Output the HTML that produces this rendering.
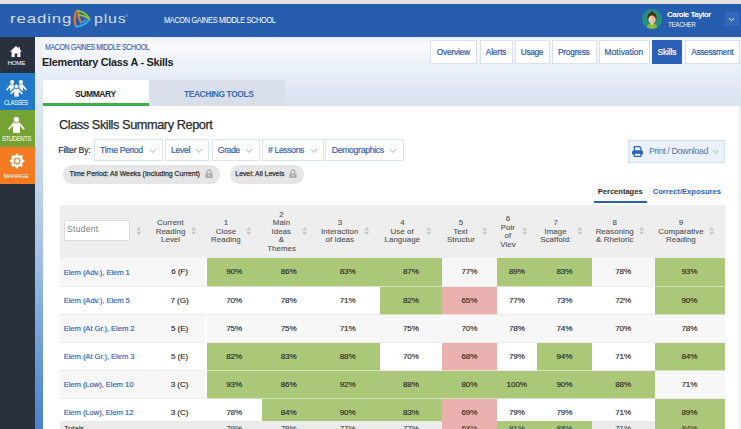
<!DOCTYPE html>
<html><head><meta charset="utf-8">
<style>
*{margin:0;padding:0;box-sizing:border-box}
html,body{width:741px;height:429px;overflow:hidden;background:#fff;font-family:"Liberation Sans",sans-serif}
.a{position:absolute}
.t{position:absolute;white-space:nowrap;line-height:1}
.g{background:#abc878}
.p{background:#e9b2af}
</style></head><body>
<div class="a" style="left:0;top:0;width:741px;height:3.5px;background:#e2e2e2"></div>
<div class="a" style="left:0;top:3.5px;width:741px;height:33.5px;background:#275dae"></div>
<div class="t" style="left:9.78px;top:12.19px;font-size:13.6px;color:#d3def3;letter-spacing:0.700px;transform-origin:0 0;transform:scaleX(1.2409)">reading</div>
<div class="t" style="left:93.87px;top:12.39px;font-size:13.6px;color:#d3def3;letter-spacing:0.700px;transform-origin:0 0;transform:scaleX(1.1721)">plus</div>
<svg class="a" style="left:124.5px;top:13.8px" width="3" height="3" viewBox="0 0 3 3"><circle cx="1.5" cy="1.5" r="1" fill="none" stroke="#9db5e0" stroke-width="0.5"/></svg>
<svg class="a" style="left:72px;top:9px" width="20" height="20" viewBox="0 0 20 20">
 <path d="M4.2 2.8 Q1.6 9 3.4 16" stroke="#ea7a1f" stroke-width="2.1" fill="none" stroke-linecap="round"/>
 <path d="M6.6 2.2 Q5.9 8.5 8.8 13.2" stroke="#ea7a1f" stroke-width="2.1" fill="none" stroke-linecap="round"/>
 <path d="M5.5 1.6 Q13 2.6 17.6 9.6" stroke="#8dc43e" stroke-width="1.7" fill="none" stroke-linecap="round"/>
 <path d="M6.8 6.2 Q12.5 6.2 17.2 10.2" stroke="#8dc43e" stroke-width="1.7" fill="none" stroke-linecap="round"/>
 <path d="M4 17.6 Q11 17.4 17.6 11" stroke="#3aa2e2" stroke-width="2.2" fill="none" stroke-linecap="round"/>
 <path d="M8.8 13.8 Q11.5 13 13.5 11" stroke="#3aa2e2" stroke-width="1.7" fill="none" stroke-linecap="round"/>
</svg>
<div class="t" style="left:163.59px;top:15.44px;font-size:9.4px;color:#ffffff;letter-spacing:-0.450px;transform-origin:0 0;transform:scaleX(0.7888)">MACON GAINES MIDDLE SCHOOL</div>
<svg class="a" style="left:642px;top:8.7px" width="20" height="20" viewBox="0 0 20 20">
 <circle cx="10" cy="10" r="10" fill="#26907f"/>
 <clipPath id="cc"><circle cx="10" cy="10" r="10"/></clipPath>
 <g clip-path="url(#cc)">
 <path d="M4.5 20 Q4.5 14.5 10 14.2 Q15.5 14.5 15.5 20Z" fill="#84b93e"/>
 <rect x="8.6" y="12" width="2.8" height="3" fill="#f2c6a0"/>
 <ellipse cx="10" cy="10" rx="3.5" ry="4.2" fill="#f5cba6"/>
 <path d="M10.2 6.5 Q13.5 7.5 13.5 10.5 Q13.3 13.5 10.2 14.2Z" fill="#e3b48e"/>
 <path d="M5.6 12.5 Q4.6 4.2 9 3.3 L10 1.2 L11 3.3 Q15.4 4.2 14.4 12.5 Q14 7 10 6.2 Q6 7 5.6 12.5Z" fill="#4b2b1d"/>
 <path d="M8.4 14.6 L10 17 L11.6 14.6Z" fill="#f2c6a0"/>
 </g>
</svg>
<div class="t" style="left:666.98px;top:10.54px;font-size:8.1px;color:#ffffff;letter-spacing:-0.450px;font-weight:bold;transform-origin:0 0;transform:scaleX(0.9692)">Carole Taylor</div>
<div class="t" style="left:667.56px;top:20.57px;font-size:7.0px;color:#eef3fb;letter-spacing:-0.450px;transform-origin:0 0;transform:scaleX(0.9086)">TEACHER</div>
<div class="a" style="left:724.5px;top:11.5px;width:14.5px;height:14.5px;background:#3169bf;border-radius:1.5px"></div>
<svg class="a" style="left:728.20px;top:16.60px" width="7.0" height="4.8" viewBox="0 0 7.0 4.8"><polyline points="1,1 3.50,3.80 6.00,1" fill="none" stroke="#e3ebf8" stroke-width="1"/></svg>
<div class="a" style="left:0;top:37px;width:34.5px;height:392px;background:#29313e"></div>
<div class="a" style="left:0;top:73px;width:34.5px;height:37px;background:#2279c9"></div>
<div class="a" style="left:0;top:110px;width:34.5px;height:37px;background:#74a334"></div>
<div class="a" style="left:0;top:147px;width:34.5px;height:37px;background:#f47b22"></div>
<svg class="a" style="left:10px;top:46px" width="12" height="11" viewBox="0 0 12 11">
 <path d="M6 0 L12 5.6 L10.4 5.6 L10.4 11 L7.3 11 L7.3 7.6 L4.7 7.6 L4.7 11 L1.6 11 L1.6 5.6 L0 5.6Z" fill="#fff"/>
 <rect x="8.4" y="1.2" width="1.5" height="2.5" fill="#fff"/>
</svg>
<div class="t" style="left:7.49px;top:60.35px;font-size:6.2px;color:#ffffff;letter-spacing:-0.208px">HOME</div>
<svg class="a" style="left:6px;top:80px" width="22" height="18" viewBox="0 0 22 18">
 <g fill="#fff" stroke="#fff" stroke-linecap="round">
  <circle cx="6.1" cy="2.1" r="2.1" stroke="none"/><circle cx="14.9" cy="2.1" r="2.1" stroke="none"/>
  <path d="M4 4.6 H8.4 V11.5 H4.2Z" stroke="none"/><path d="M12.6 4.6 H17 L16.8 11.5 H12.6Z" stroke="none"/>
  <path d="M4.6 5.2 L1.1 9.6 M16.4 5.2 L19.9 9.6" stroke-width="1.6" fill="none"/>
 </g>
 <g>
  <circle cx="10.5" cy="6.3" r="2.9" fill="#2279c9"/>
  <path d="M7 8.2 H14 L17.6 12.6 L13.8 17.5 H7.2 L3.4 12.6Z" fill="#2279c9"/>
  <circle cx="10.5" cy="6.3" r="1.9" fill="#fff"/>
  <path d="M8.3 8.9 H12.7 V16.6 H8.3Z" fill="#fff"/>
  <path d="M8.9 9.4 L5.2 13.4 M12.1 9.4 L15.8 13.4" stroke="#fff" stroke-width="1.6" stroke-linecap="round"/>
 </g>
</svg>
<div class="t" style="left:4.41px;top:99.58px;font-size:6.4px;color:#ffffff;letter-spacing:-0.450px;transform-origin:0 0;transform:scaleX(0.9044)">CLASSES</div>
<svg class="a" style="left:8px;top:115.5px" width="18" height="18" viewBox="0 0 18 18">
 <circle cx="8.3" cy="3.5" r="2.7" fill="#fff"/>
 <path d="M4.6 6.8 H12 L12 16.9 H5.2 Z" fill="#fff"/>
 <path d="M5.6 7.4 L1.1 12.8 M11.2 7.4 L15.7 12.8" stroke="#fff" stroke-width="1.7" stroke-linecap="round"/>
</svg>
<div class="t" style="left:1.73px;top:136.48px;font-size:6.4px;color:#ffffff;letter-spacing:-0.450px;transform-origin:0 0;transform:scaleX(0.9429)">STUDENTS</div>
<svg class="a" style="left:8.9px;top:153.3px" width="16" height="16" viewBox="0 0 16 16">
 <polygon points="8.00,0.40 10.03,3.10 13.37,2.63 12.90,5.97 15.60,8.00 12.90,10.03 13.37,13.37 10.03,12.90 8.00,15.60 5.97,12.90 2.63,13.37 3.10,10.03 0.40,8.00 3.10,5.97 2.63,2.63 5.97,3.10" fill="#fff" stroke="#fff" stroke-width="0.6" stroke-linejoin="round"/>
 <circle cx="8" cy="8" r="2.8" fill="none" stroke="#f47b22" stroke-width="1.15"/>
 
</svg>
<div class="t" style="left:3.79px;top:172.75px;font-size:6.2px;color:#ffffff;letter-spacing:-0.399px">MANAGE</div>
<div class="a" style="left:34.5px;top:37px;width:8.5px;height:392px;background:linear-gradient(#f1f4f9 0%,#e0e8f3 16%,#cbdaee 30%,#b9d0eb 42%,#a4c2e6 54%,#86b0dd 67%,#6296d4 85%,#4d80cc 100%)"></div>
<div class="a" style="left:43px;top:37px;width:698px;height:69px;background:linear-gradient(#e6e9ee 0px,#f3f5f8 3px,#f7f9fc 8px,#ebf1f9 30px,#dde6f2 58px,#d9e3f0 69px)"></div>
<div class="t" style="left:45.13px;top:43.37px;font-size:8.3px;color:#3d66b3;letter-spacing:-0.450px;transform-origin:0 0;transform:scaleX(0.8421);-webkit-text-stroke:0.15px #3d66b3">MACON GAINES MIDDLE SCHOOL</div>
<div class="t" style="left:42.07px;top:56.97px;font-size:10.9px;color:#222222;letter-spacing:-0.287px;font-weight:bold">Elementary Class A - Skills</div>
<div class="a" style="left:430px;top:39.5px;width:47px;height:24.5px;background:#ffffff;border:1px solid #d6e0ee"></div>
<div class="t" style="left:436.80px;top:47.69px;font-size:8.4px;color:#2c5aa8;letter-spacing:-0.247px;-webkit-text-stroke:0.2px #2c5aa8">Overview</div>
<div class="a" style="left:479.5px;top:39.5px;width:33.0px;height:24.5px;background:#ffffff;border:1px solid #d6e0ee"></div>
<div class="t" style="left:485.78px;top:47.69px;font-size:8.4px;color:#2c5aa8;letter-spacing:-0.190px;-webkit-text-stroke:0.2px #2c5aa8">Alerts</div>
<div class="a" style="left:514.5px;top:39.5px;width:35.5px;height:24.5px;background:#ffffff;border:1px solid #d6e0ee"></div>
<div class="t" style="left:520.85px;top:47.69px;font-size:8.4px;color:#2c5aa8;letter-spacing:-0.415px;-webkit-text-stroke:0.2px #2c5aa8">Usage</div>
<div class="a" style="left:552px;top:39.5px;width:44.5px;height:24.5px;background:#ffffff;border:1px solid #d6e0ee"></div>
<div class="t" style="left:557.91px;top:47.69px;font-size:8.4px;color:#2c5aa8;letter-spacing:-0.231px;-webkit-text-stroke:0.2px #2c5aa8">Progress</div>
<div class="a" style="left:598.5px;top:39.5px;width:51.5px;height:24.5px;background:#ffffff;border:1px solid #d6e0ee"></div>
<div class="t" style="left:604.61px;top:47.69px;font-size:8.4px;color:#2c5aa8;letter-spacing:0.050px;-webkit-text-stroke:0.2px #2c5aa8">Motivation</div>
<div class="a" style="left:652.2px;top:39.5px;width:30.0px;height:24.5px;background:#2a60b8;border:1px solid #2a60b8"></div>
<div class="t" style="left:657.62px;top:47.69px;font-size:8.4px;color:#ffffff;letter-spacing:-0.163px;-webkit-text-stroke:0.2px #ffffff">Skills</div>
<div class="a" style="left:685px;top:39.5px;width:55px;height:24.5px;background:#ffffff;border:1px solid #d6e0ee"></div>
<div class="t" style="left:691.28px;top:47.69px;font-size:8.4px;color:#2c5aa8;letter-spacing:-0.375px;-webkit-text-stroke:0.2px #2c5aa8">Assessment</div>
<div class="a" style="left:43px;top:80.3px;width:106px;height:25.7px;background:#fff"></div>
<div class="a" style="left:43px;top:103px;width:106px;height:3px;background:#3fae4a"></div>
<div class="t" style="left:75.35px;top:89.58px;font-size:9.0px;color:#222222;letter-spacing:-0.450px;font-weight:bold;transform-origin:0 0;transform:scaleX(0.9471)">SUMMARY</div>
<div class="a" style="left:149px;top:80.3px;width:136.4px;height:25.7px;background:#d8dfe8"></div>
<div class="t" style="left:183.71px;top:89.58px;font-size:9.0px;color:#3d6ab5;letter-spacing:-0.450px;font-weight:bold;transform-origin:0 0;transform:scaleX(0.9367)">TEACHING TOOLS</div>
<div class="a" style="left:43px;top:106px;width:696px;height:323px;background:#fff"></div>
<div class="a" style="left:739px;top:106px;width:2px;height:323px;background:#e9eef5"></div>
<div class="t" style="left:58.85px;top:119.38px;font-size:12.9px;color:#2a2a2a;letter-spacing:-0.450px;transform-origin:0 0;transform:scaleX(0.9911);-webkit-text-stroke:0.25px #2a2a2a">Class Skills Summary Report</div>
<div class="t" style="left:58.29px;top:145.94px;font-size:8.7px;color:#333333;letter-spacing:-0.201px;-webkit-text-stroke:0.2px #333">Filter By:</div>
<div class="a" style="left:93.8px;top:139.2px;width:68.8px;height:22.2px;background:#fff;border:1px solid #d9e4f3"></div>
<div class="t" style="left:100.10px;top:145.94px;font-size:8.7px;color:#2f62b3;letter-spacing:-0.344px;-webkit-text-stroke:0.18px #2f62b3">Time Period</div>
<svg class="a" style="left:148.70px;top:148.00px" width="7.8" height="5.5" viewBox="0 0 7.8 5.5"><polyline points="1,1 3.90,4.50 6.80,1" fill="none" stroke="#9bcf8a" stroke-width="1.0"/></svg>
<div class="a" style="left:164.9px;top:139.2px;width:44.5px;height:22.2px;background:#fff;border:1px solid #d9e4f3"></div>
<div class="t" style="left:170.99px;top:145.94px;font-size:8.7px;color:#2f62b3;letter-spacing:-0.301px;-webkit-text-stroke:0.18px #2f62b3">Level</div>
<svg class="a" style="left:195.00px;top:148.00px" width="7.8" height="5.5" viewBox="0 0 7.8 5.5"><polyline points="1,1 3.90,4.50 6.80,1" fill="none" stroke="#9bcf8a" stroke-width="1.0"/></svg>
<div class="a" style="left:211.8px;top:139.2px;width:47.8px;height:22.2px;background:#fff;border:1px solid #d9e4f3"></div>
<div class="t" style="left:217.86px;top:145.94px;font-size:8.7px;color:#2f62b3;letter-spacing:-0.450px;-webkit-text-stroke:0.18px #2f62b3">Grade</div>
<svg class="a" style="left:245.20px;top:148.00px" width="7.8" height="5.5" viewBox="0 0 7.8 5.5"><polyline points="1,1 3.90,4.50 6.80,1" fill="none" stroke="#9bcf8a" stroke-width="1.0"/></svg>
<div class="a" style="left:262px;top:139.2px;width:61.8px;height:22.2px;background:#fff;border:1px solid #d9e4f3"></div>
<div class="t" style="left:268.06px;top:145.94px;font-size:8.7px;color:#2f62b3;letter-spacing:-0.401px;-webkit-text-stroke:0.18px #2f62b3"># Lessons</div>
<svg class="a" style="left:309.60px;top:148.00px" width="7.8" height="5.5" viewBox="0 0 7.8 5.5"><polyline points="1,1 3.90,4.50 6.80,1" fill="none" stroke="#9bcf8a" stroke-width="1.0"/></svg>
<div class="a" style="left:325.4px;top:139.2px;width:78.3px;height:22.2px;background:#fff;border:1px solid #d9e4f3"></div>
<div class="t" style="left:331.79px;top:145.94px;font-size:8.7px;color:#2f62b3;letter-spacing:-0.333px;-webkit-text-stroke:0.18px #2f62b3">Demographics</div>
<svg class="a" style="left:389.00px;top:148.00px" width="7.8" height="5.5" viewBox="0 0 7.8 5.5"><polyline points="1,1 3.90,4.50 6.80,1" fill="none" stroke="#9bcf8a" stroke-width="1.0"/></svg>
<div class="a" style="left:62.6px;top:165.2px;width:157.2px;height:18.4px;background:#e6e6e6;border-radius:9.2px"></div>
<div class="t" style="left:69.55px;top:171.46px;font-size:6.9px;color:#333333;letter-spacing:0.013px;-webkit-text-stroke:0.25px #333">Time Period: All Weeks (Including Current)</div>
<svg class="a" style="left:205.1px;top:168.9px" width="8" height="9.5" viewBox="0 0 8 9.5"><path d="M2 4.2 V3 A2 2 0 0 1 6 3 V4.2" stroke="#b0b0b0" stroke-width="1.3" fill="none"/><rect x="0.3" y="4.2" width="7.4" height="5.3" rx="0.6" fill="#b0b0b0"/><circle cx="4" cy="6.6" r="0.9" fill="#d6d6d6"/></svg>
<div class="a" style="left:229.6px;top:165px;width:74.5px;height:18.6px;background:#e6e6e6;border-radius:9.3px"></div>
<div class="t" style="left:235.33px;top:171.26px;font-size:6.9px;color:#333333;letter-spacing:-0.022px;-webkit-text-stroke:0.25px #333">Level: All Levels</div>
<svg class="a" style="left:288.9px;top:168.8px" width="8" height="9.5" viewBox="0 0 8 9.5"><path d="M2 4.2 V3 A2 2 0 0 1 6 3 V4.2" stroke="#b0b0b0" stroke-width="1.3" fill="none"/><rect x="0.3" y="4.2" width="7.4" height="5.3" rx="0.6" fill="#b0b0b0"/><circle cx="4" cy="6.6" r="0.9" fill="#d6d6d6"/></svg>
<div class="a" style="left:628px;top:139.6px;width:97.3px;height:23.3px;background:#eaf1fa;border:1px solid #d3e0f1"></div>
<svg class="a" style="left:632px;top:146px" width="11.2" height="11" viewBox="0 0 11.2 11">
 <path d="M2.3 0.6 H7.6 L9 2 V5 H2.3Z" fill="none" stroke="#2d62b5" stroke-width="1.2"/>
 <rect x="0" y="4.6" width="11.2" height="4.2" rx="1.6" fill="#2d62b5"/>
 <rect x="2.3" y="7.2" width="6.6" height="3.2" fill="#eaf1fa" stroke="#2d62b5" stroke-width="1.2"/>
</svg>
<div class="t" style="left:648.76px;top:147.11px;font-size:9.2px;color:#5875a8;letter-spacing:-0.450px;transform-origin:0 0;transform:scaleX(0.9798)">Print / Download</div>
<svg class="a" style="left:712.00px;top:148.90px" width="7.1" height="5.3" viewBox="0 0 7.1 5.3"><polyline points="1,1 3.55,4.30 6.10,1" fill="none" stroke="#9bcf8a" stroke-width="1.0"/></svg>
<div class="t" style="left:597.69px;top:187.77px;font-size:7.6px;color:#2a2a2a;letter-spacing:-0.018px;font-weight:bold">Percentages</div>
<div class="a" style="left:594.2px;top:200.6px;width:52.5px;height:2.9px;background:#2a60b8"></div>
<div class="t" style="left:652.69px;top:187.77px;font-size:7.6px;color:#2c62b8;letter-spacing:0.026px;font-weight:bold">Correct/Exposures</div>
<div class="a" style="left:59.5px;top:205px;width:665px;height:53.4px;background:#eeeeee"></div>
<div class="a" style="left:64px;top:220px;width:66.3px;height:21px;background:#fff;border:1px solid #dadada;border-radius:1.5px"></div>
<div class="t" style="left:67.11px;top:225.12px;font-size:8.6px;color:#7a7a7a;letter-spacing:0.218px">Student</div>
<svg class="a" style="left:135.9px;top:226.9px" width="5.5" height="8" viewBox="0 0 5.5 8"><path d="M2.75 0 L5.2 3.2 L0.3 3.2Z M2.75 8 L5.2 4.8 L0.3 4.8Z" fill="#c6c6c6"/></svg>
<div class="t" style="left:157.11px;top:219.31px;font-size:7.9px;color:#555555;letter-spacing:0.050px;-webkit-text-stroke:0.12px #555">Current</div>
<div class="t" style="left:155.67px;top:227.81px;font-size:7.9px;color:#555555;letter-spacing:0.050px;-webkit-text-stroke:0.12px #555">Reading</div>
<div class="t" style="left:161.00px;top:236.31px;font-size:7.9px;color:#555555;letter-spacing:0.050px;-webkit-text-stroke:0.12px #555">Level</div>
<svg class="a" style="left:191px;top:226.9px" width="5.5" height="8" viewBox="0 0 5.5 8"><path d="M2.75 0 L5.2 3.2 L0.3 3.2Z M2.75 8 L5.2 4.8 L0.3 4.8Z" fill="#c6c6c6"/></svg>
<div class="t" style="left:223.70px;top:219.31px;font-size:7.9px;color:#555555;letter-spacing:0.050px;-webkit-text-stroke:0.12px #555">1</div>
<div class="t" style="left:215.78px;top:227.81px;font-size:7.9px;color:#555555;letter-spacing:0.050px;-webkit-text-stroke:0.12px #555">Close</div>
<div class="t" style="left:211.07px;top:236.31px;font-size:7.9px;color:#555555;letter-spacing:0.050px;-webkit-text-stroke:0.12px #555">Reading</div>
<svg class="a" style="left:246.2px;top:226.9px" width="5.5" height="8" viewBox="0 0 5.5 8"><path d="M2.75 0 L5.2 3.2 L0.3 3.2Z M2.75 8 L5.2 4.8 L0.3 4.8Z" fill="#c6c6c6"/></svg>
<div class="t" style="left:279.30px;top:210.81px;font-size:7.9px;color:#555555;letter-spacing:0.050px;-webkit-text-stroke:0.12px #555">2</div>
<div class="t" style="left:272.80px;top:219.31px;font-size:7.9px;color:#555555;letter-spacing:0.050px;-webkit-text-stroke:0.12px #555">Main</div>
<div class="t" style="left:271.52px;top:227.81px;font-size:7.9px;color:#555555;letter-spacing:0.050px;-webkit-text-stroke:0.12px #555">Ideas</div>
<div class="t" style="left:278.79px;top:236.31px;font-size:7.9px;color:#555555;letter-spacing:0.050px;-webkit-text-stroke:0.12px #555">&</div>
<div class="t" style="left:267.16px;top:244.81px;font-size:7.9px;color:#555555;letter-spacing:0.050px;-webkit-text-stroke:0.12px #555">Themes</div>
<svg class="a" style="left:301.5px;top:226.9px" width="5.5" height="8" viewBox="0 0 5.5 8"><path d="M2.75 0 L5.2 3.2 L0.3 3.2Z M2.75 8 L5.2 4.8 L0.3 4.8Z" fill="#c6c6c6"/></svg>
<div class="t" style="left:337.63px;top:219.31px;font-size:7.9px;color:#555555;letter-spacing:0.050px;-webkit-text-stroke:0.12px #555">3</div>
<div class="t" style="left:321.00px;top:227.81px;font-size:7.9px;color:#555555;letter-spacing:0.050px;-webkit-text-stroke:0.12px #555">Interaction</div>
<div class="t" style="left:325.55px;top:236.31px;font-size:7.9px;color:#555555;letter-spacing:0.050px;-webkit-text-stroke:0.12px #555">of Ideas</div>
<svg class="a" style="left:363.5px;top:226.9px" width="5.5" height="8" viewBox="0 0 5.5 8"><path d="M2.75 0 L5.2 3.2 L0.3 3.2Z M2.75 8 L5.2 4.8 L0.3 4.8Z" fill="#c6c6c6"/></svg>
<div class="t" style="left:400.23px;top:219.31px;font-size:7.9px;color:#555555;letter-spacing:0.050px;-webkit-text-stroke:0.12px #555">4</div>
<div class="t" style="left:390.55px;top:227.81px;font-size:7.9px;color:#555555;letter-spacing:0.050px;-webkit-text-stroke:0.12px #555">Use of</div>
<div class="t" style="left:384.50px;top:236.31px;font-size:7.9px;color:#555555;letter-spacing:0.050px;-webkit-text-stroke:0.12px #555">Language</div>
<svg class="a" style="left:426.1px;top:226.9px" width="5.5" height="8" viewBox="0 0 5.5 8"><path d="M2.75 0 L5.2 3.2 L0.3 3.2Z M2.75 8 L5.2 4.8 L0.3 4.8Z" fill="#c6c6c6"/></svg>
<div class="t" style="left:458.81px;top:219.31px;font-size:7.9px;color:#555555;letter-spacing:0.050px;-webkit-text-stroke:0.12px #555">5</div>
<div class="t" style="left:453.18px;top:227.81px;font-size:7.9px;color:#555555;letter-spacing:0.050px;-webkit-text-stroke:0.12px #555">Text</div>
<div class="t" style="left:446.88px;top:236.31px;font-size:7.9px;color:#555555;letter-spacing:0.050px;-webkit-text-stroke:0.12px #555">Structur</div>
<svg class="a" style="left:481.5px;top:226.9px" width="5.5" height="8" viewBox="0 0 5.5 8"><path d="M2.75 0 L5.2 3.2 L0.3 3.2Z M2.75 8 L5.2 4.8 L0.3 4.8Z" fill="#c6c6c6"/></svg>
<div class="t" style="left:505.78px;top:215.06px;font-size:7.9px;color:#555555;letter-spacing:0.050px;-webkit-text-stroke:0.12px #555">6</div>
<div class="t" style="left:500.64px;top:223.56px;font-size:7.9px;color:#555555;letter-spacing:0.050px;-webkit-text-stroke:0.12px #555">Poir</div>
<div class="t" style="left:504.51px;top:232.06px;font-size:7.9px;color:#555555;letter-spacing:0.050px;-webkit-text-stroke:0.12px #555">of</div>
<div class="t" style="left:500.24px;top:240.56px;font-size:7.9px;color:#555555;letter-spacing:0.050px;-webkit-text-stroke:0.12px #555">Viev</div>
<svg class="a" style="left:521.5px;top:226.9px" width="5.5" height="8" viewBox="0 0 5.5 8"><path d="M2.75 0 L5.2 3.2 L0.3 3.2Z M2.75 8 L5.2 4.8 L0.3 4.8Z" fill="#c6c6c6"/></svg>
<div class="t" style="left:553.50px;top:219.31px;font-size:7.9px;color:#555555;letter-spacing:0.050px;-webkit-text-stroke:0.12px #555">7</div>
<div class="t" style="left:544.43px;top:227.81px;font-size:7.9px;color:#555555;letter-spacing:0.050px;-webkit-text-stroke:0.12px #555">Image</div>
<div class="t" style="left:540.31px;top:236.31px;font-size:7.9px;color:#555555;letter-spacing:0.050px;-webkit-text-stroke:0.12px #555">Scaffold:</div>
<svg class="a" style="left:576.5px;top:226.9px" width="5.5" height="8" viewBox="0 0 5.5 8"><path d="M2.75 0 L5.2 3.2 L0.3 3.2Z M2.75 8 L5.2 4.8 L0.3 4.8Z" fill="#c6c6c6"/></svg>
<div class="t" style="left:612.60px;top:219.31px;font-size:7.9px;color:#555555;letter-spacing:0.050px;-webkit-text-stroke:0.12px #555">8</div>
<div class="t" style="left:595.64px;top:227.81px;font-size:7.9px;color:#555555;letter-spacing:0.050px;-webkit-text-stroke:0.12px #555">Reasoning</div>
<div class="t" style="left:596.10px;top:236.31px;font-size:7.9px;color:#555555;letter-spacing:0.050px;-webkit-text-stroke:0.12px #555">& Rhetoric</div>
<svg class="a" style="left:638.8px;top:226.9px" width="5.5" height="8" viewBox="0 0 5.5 8"><path d="M2.75 0 L5.2 3.2 L0.3 3.2Z M2.75 8 L5.2 4.8 L0.3 4.8Z" fill="#c6c6c6"/></svg>
<div class="t" style="left:678.81px;top:219.31px;font-size:7.9px;color:#555555;letter-spacing:0.050px;-webkit-text-stroke:0.12px #555">9</div>
<div class="t" style="left:658.33px;top:227.81px;font-size:7.9px;color:#555555;letter-spacing:0.050px;-webkit-text-stroke:0.12px #555">Comparative</div>
<div class="t" style="left:666.07px;top:236.31px;font-size:7.9px;color:#555555;letter-spacing:0.050px;-webkit-text-stroke:0.12px #555">Reading</div>
<svg class="a" style="left:708.8px;top:226.9px" width="5.5" height="8" viewBox="0 0 5.5 8"><path d="M2.75 0 L5.2 3.2 L0.3 3.2Z M2.75 8 L5.2 4.8 L0.3 4.8Z" fill="#c6c6c6"/></svg>
<div class="a" style="left:59.5px;top:258.40px;width:665px;height:28.60px;background:#f7f7f7;border-bottom:1px solid #ececec"></div>
<div class="t" style="left:63.67px;top:268.68px;font-size:7.7px;letter-spacing:-0.086px;color:#2f63b5;-webkit-text-stroke:0.15px #2f63b5">Elem (Adv.), Elem 1</div>
<div class="t" style="left:171.14px;top:268.34px;font-size:8.1px;color:#2a2a2a;letter-spacing:-0.072px;-webkit-text-stroke:0.15px #2a2a2a">6 (F)</div>
<div class="a g" style="left:206.5px;top:258.40px;width:55.5px;height:28.60px;border-bottom:1px solid rgba(255,255,255,0.5)"></div>
<div class="t" style="left:226.17px;top:268.34px;font-size:8.1px;color:#2a2a2a;letter-spacing:-0.072px;-webkit-text-stroke:0.15px #2a2a2a">90%</div>
<div class="a g" style="left:262.0px;top:258.40px;width:53.5px;height:28.60px;border-bottom:1px solid rgba(255,255,255,0.5)"></div>
<div class="t" style="left:280.68px;top:268.34px;font-size:8.1px;color:#2a2a2a;letter-spacing:-0.072px;-webkit-text-stroke:0.15px #2a2a2a">86%</div>
<div class="a g" style="left:315.5px;top:258.40px;width:64.5px;height:28.60px;border-bottom:1px solid rgba(255,255,255,0.5)"></div>
<div class="t" style="left:339.68px;top:268.34px;font-size:8.1px;color:#2a2a2a;letter-spacing:-0.072px;-webkit-text-stroke:0.15px #2a2a2a">83%</div>
<div class="a g" style="left:380.0px;top:258.40px;width:62.0px;height:28.60px;border-bottom:1px solid rgba(255,255,255,0.5)"></div>
<div class="t" style="left:402.93px;top:268.34px;font-size:8.1px;color:#2a2a2a;letter-spacing:-0.072px;-webkit-text-stroke:0.15px #2a2a2a">87%</div>
<div class="t" style="left:461.40px;top:268.34px;font-size:8.1px;color:#2a2a2a;letter-spacing:-0.072px;-webkit-text-stroke:0.15px #2a2a2a">77%</div>
<div class="a g" style="left:497.0px;top:258.40px;width:40.0px;height:28.60px;border-bottom:1px solid rgba(255,255,255,0.5)"></div>
<div class="t" style="left:508.93px;top:268.34px;font-size:8.1px;color:#2a2a2a;letter-spacing:-0.072px;-webkit-text-stroke:0.15px #2a2a2a">89%</div>
<div class="a g" style="left:537.0px;top:258.40px;width:55.0px;height:28.60px;border-bottom:1px solid rgba(255,255,255,0.5)"></div>
<div class="t" style="left:556.43px;top:268.34px;font-size:8.1px;color:#2a2a2a;letter-spacing:-0.072px;-webkit-text-stroke:0.15px #2a2a2a">83%</div>
<div class="t" style="left:615.15px;top:268.34px;font-size:8.1px;color:#2a2a2a;letter-spacing:-0.072px;-webkit-text-stroke:0.15px #2a2a2a">78%</div>
<div class="a g" style="left:654.5px;top:258.40px;width:70.0px;height:28.60px;border-bottom:1px solid rgba(255,255,255,0.5)"></div>
<div class="t" style="left:681.42px;top:268.34px;font-size:8.1px;color:#2a2a2a;letter-spacing:-0.072px;-webkit-text-stroke:0.15px #2a2a2a">93%</div>
<div class="a" style="left:59.5px;top:287.00px;width:665px;height:28.08px;background:#ffffff;border-bottom:1px solid #ececec"></div>
<div class="t" style="left:63.67px;top:297.02px;font-size:7.7px;letter-spacing:-0.086px;color:#2f63b5;-webkit-text-stroke:0.15px #2f63b5">Elem (Adv.), Elem 5</div>
<div class="t" style="left:170.46px;top:296.68px;font-size:8.1px;color:#2a2a2a;letter-spacing:-0.072px;-webkit-text-stroke:0.15px #2a2a2a">7 (G)</div>
<div class="t" style="left:226.15px;top:296.68px;font-size:8.1px;color:#2a2a2a;letter-spacing:-0.072px;-webkit-text-stroke:0.15px #2a2a2a">70%</div>
<div class="t" style="left:280.65px;top:296.68px;font-size:8.1px;color:#2a2a2a;letter-spacing:-0.072px;-webkit-text-stroke:0.15px #2a2a2a">78%</div>
<div class="t" style="left:339.65px;top:296.68px;font-size:8.1px;color:#2a2a2a;letter-spacing:-0.072px;-webkit-text-stroke:0.15px #2a2a2a">71%</div>
<div class="a g" style="left:380.0px;top:287.00px;width:62.0px;height:28.08px;border-bottom:1px solid rgba(255,255,255,0.5)"></div>
<div class="t" style="left:402.93px;top:296.68px;font-size:8.1px;color:#2a2a2a;letter-spacing:-0.072px;-webkit-text-stroke:0.15px #2a2a2a">82%</div>
<div class="a p" style="left:442.0px;top:287.00px;width:55.0px;height:28.08px;border-bottom:1px solid rgba(255,255,255,0.5)"></div>
<div class="t" style="left:461.40px;top:296.68px;font-size:8.1px;color:#2a2a2a;letter-spacing:-0.072px;-webkit-text-stroke:0.15px #2a2a2a">65%</div>
<div class="t" style="left:508.90px;top:296.68px;font-size:8.1px;color:#2a2a2a;letter-spacing:-0.072px;-webkit-text-stroke:0.15px #2a2a2a">77%</div>
<div class="t" style="left:556.40px;top:296.68px;font-size:8.1px;color:#2a2a2a;letter-spacing:-0.072px;-webkit-text-stroke:0.15px #2a2a2a">73%</div>
<div class="t" style="left:615.15px;top:296.68px;font-size:8.1px;color:#2a2a2a;letter-spacing:-0.072px;-webkit-text-stroke:0.15px #2a2a2a">72%</div>
<div class="a g" style="left:654.5px;top:287.00px;width:70.0px;height:28.08px;border-bottom:1px solid rgba(255,255,255,0.5)"></div>
<div class="t" style="left:681.42px;top:296.68px;font-size:8.1px;color:#2a2a2a;letter-spacing:-0.072px;-webkit-text-stroke:0.15px #2a2a2a">90%</div>
<div class="a" style="left:59.5px;top:315.08px;width:665px;height:28.08px;background:#f7f7f7;border-bottom:1px solid #ececec"></div>
<div class="t" style="left:63.67px;top:325.10px;font-size:7.7px;letter-spacing:-0.086px;color:#2f63b5;-webkit-text-stroke:0.15px #2f63b5">Elem (At Gr.), Elem 2</div>
<div class="t" style="left:170.96px;top:324.76px;font-size:8.1px;color:#2a2a2a;letter-spacing:-0.072px;-webkit-text-stroke:0.15px #2a2a2a">5 (E)</div>
<div class="t" style="left:226.15px;top:324.76px;font-size:8.1px;color:#2a2a2a;letter-spacing:-0.072px;-webkit-text-stroke:0.15px #2a2a2a">75%</div>
<div class="t" style="left:280.65px;top:324.76px;font-size:8.1px;color:#2a2a2a;letter-spacing:-0.072px;-webkit-text-stroke:0.15px #2a2a2a">75%</div>
<div class="t" style="left:339.65px;top:324.76px;font-size:8.1px;color:#2a2a2a;letter-spacing:-0.072px;-webkit-text-stroke:0.15px #2a2a2a">71%</div>
<div class="t" style="left:402.90px;top:324.76px;font-size:8.1px;color:#2a2a2a;letter-spacing:-0.072px;-webkit-text-stroke:0.15px #2a2a2a">75%</div>
<div class="t" style="left:461.40px;top:324.76px;font-size:8.1px;color:#2a2a2a;letter-spacing:-0.072px;-webkit-text-stroke:0.15px #2a2a2a">70%</div>
<div class="t" style="left:508.90px;top:324.76px;font-size:8.1px;color:#2a2a2a;letter-spacing:-0.072px;-webkit-text-stroke:0.15px #2a2a2a">78%</div>
<div class="t" style="left:556.40px;top:324.76px;font-size:8.1px;color:#2a2a2a;letter-spacing:-0.072px;-webkit-text-stroke:0.15px #2a2a2a">74%</div>
<div class="t" style="left:615.15px;top:324.76px;font-size:8.1px;color:#2a2a2a;letter-spacing:-0.072px;-webkit-text-stroke:0.15px #2a2a2a">70%</div>
<div class="t" style="left:681.40px;top:324.76px;font-size:8.1px;color:#2a2a2a;letter-spacing:-0.072px;-webkit-text-stroke:0.15px #2a2a2a">78%</div>
<div class="a" style="left:59.5px;top:343.16px;width:665px;height:28.08px;background:#ffffff;border-bottom:1px solid #ececec"></div>
<div class="t" style="left:63.67px;top:353.18px;font-size:7.7px;letter-spacing:-0.086px;color:#2f63b5;-webkit-text-stroke:0.15px #2f63b5">Elem (At Gr.), Elem 3</div>
<div class="t" style="left:170.96px;top:352.84px;font-size:8.1px;color:#2a2a2a;letter-spacing:-0.072px;-webkit-text-stroke:0.15px #2a2a2a">5 (E)</div>
<div class="a g" style="left:206.5px;top:343.16px;width:55.5px;height:28.08px;border-bottom:1px solid rgba(255,255,255,0.5)"></div>
<div class="t" style="left:226.18px;top:352.84px;font-size:8.1px;color:#2a2a2a;letter-spacing:-0.072px;-webkit-text-stroke:0.15px #2a2a2a">82%</div>
<div class="a g" style="left:262.0px;top:343.16px;width:53.5px;height:28.08px;border-bottom:1px solid rgba(255,255,255,0.5)"></div>
<div class="t" style="left:280.68px;top:352.84px;font-size:8.1px;color:#2a2a2a;letter-spacing:-0.072px;-webkit-text-stroke:0.15px #2a2a2a">83%</div>
<div class="a g" style="left:315.5px;top:343.16px;width:64.5px;height:28.08px;border-bottom:1px solid rgba(255,255,255,0.5)"></div>
<div class="t" style="left:339.68px;top:352.84px;font-size:8.1px;color:#2a2a2a;letter-spacing:-0.072px;-webkit-text-stroke:0.15px #2a2a2a">88%</div>
<div class="t" style="left:402.90px;top:352.84px;font-size:8.1px;color:#2a2a2a;letter-spacing:-0.072px;-webkit-text-stroke:0.15px #2a2a2a">70%</div>
<div class="a p" style="left:442.0px;top:343.16px;width:55.0px;height:28.08px;border-bottom:1px solid rgba(255,255,255,0.5)"></div>
<div class="t" style="left:461.40px;top:352.84px;font-size:8.1px;color:#2a2a2a;letter-spacing:-0.072px;-webkit-text-stroke:0.15px #2a2a2a">68%</div>
<div class="t" style="left:508.90px;top:352.84px;font-size:8.1px;color:#2a2a2a;letter-spacing:-0.072px;-webkit-text-stroke:0.15px #2a2a2a">79%</div>
<div class="a g" style="left:537.0px;top:343.16px;width:55.0px;height:28.08px;border-bottom:1px solid rgba(255,255,255,0.5)"></div>
<div class="t" style="left:556.42px;top:352.84px;font-size:8.1px;color:#2a2a2a;letter-spacing:-0.072px;-webkit-text-stroke:0.15px #2a2a2a">94%</div>
<div class="t" style="left:615.15px;top:352.84px;font-size:8.1px;color:#2a2a2a;letter-spacing:-0.072px;-webkit-text-stroke:0.15px #2a2a2a">71%</div>
<div class="a g" style="left:654.5px;top:343.16px;width:70.0px;height:28.08px;border-bottom:1px solid rgba(255,255,255,0.5)"></div>
<div class="t" style="left:681.43px;top:352.84px;font-size:8.1px;color:#2a2a2a;letter-spacing:-0.072px;-webkit-text-stroke:0.15px #2a2a2a">84%</div>
<div class="a" style="left:59.5px;top:371.24px;width:665px;height:28.08px;background:#f7f7f7;border-bottom:1px solid #ececec"></div>
<div class="t" style="left:63.67px;top:381.26px;font-size:7.7px;letter-spacing:-0.086px;color:#2f63b5;-webkit-text-stroke:0.15px #2f63b5">Elem (Low), Elem 10</div>
<div class="t" style="left:170.74px;top:380.92px;font-size:8.1px;color:#2a2a2a;letter-spacing:-0.072px;-webkit-text-stroke:0.15px #2a2a2a">3 (C)</div>
<div class="a g" style="left:206.5px;top:371.24px;width:55.5px;height:28.08px;border-bottom:1px solid rgba(255,255,255,0.5)"></div>
<div class="t" style="left:226.17px;top:380.92px;font-size:8.1px;color:#2a2a2a;letter-spacing:-0.072px;-webkit-text-stroke:0.15px #2a2a2a">93%</div>
<div class="a g" style="left:262.0px;top:371.24px;width:53.5px;height:28.08px;border-bottom:1px solid rgba(255,255,255,0.5)"></div>
<div class="t" style="left:280.68px;top:380.92px;font-size:8.1px;color:#2a2a2a;letter-spacing:-0.072px;-webkit-text-stroke:0.15px #2a2a2a">86%</div>
<div class="a g" style="left:315.5px;top:371.24px;width:64.5px;height:28.08px;border-bottom:1px solid rgba(255,255,255,0.5)"></div>
<div class="t" style="left:339.67px;top:380.92px;font-size:8.1px;color:#2a2a2a;letter-spacing:-0.072px;-webkit-text-stroke:0.15px #2a2a2a">92%</div>
<div class="a g" style="left:380.0px;top:371.24px;width:62.0px;height:28.08px;border-bottom:1px solid rgba(255,255,255,0.5)"></div>
<div class="t" style="left:402.93px;top:380.92px;font-size:8.1px;color:#2a2a2a;letter-spacing:-0.072px;-webkit-text-stroke:0.15px #2a2a2a">88%</div>
<div class="a g" style="left:442.0px;top:371.24px;width:55.0px;height:28.08px;border-bottom:1px solid rgba(255,255,255,0.5)"></div>
<div class="t" style="left:461.43px;top:380.92px;font-size:8.1px;color:#2a2a2a;letter-spacing:-0.072px;-webkit-text-stroke:0.15px #2a2a2a">80%</div>
<div class="a g" style="left:497.0px;top:371.24px;width:40.0px;height:28.08px;border-bottom:1px solid rgba(255,255,255,0.5)"></div>
<div class="t" style="left:506.59px;top:380.92px;font-size:8.1px;color:#2a2a2a;letter-spacing:-0.072px;-webkit-text-stroke:0.15px #2a2a2a">100%</div>
<div class="a g" style="left:537.0px;top:371.24px;width:55.0px;height:28.08px;border-bottom:1px solid rgba(255,255,255,0.5)"></div>
<div class="t" style="left:556.42px;top:380.92px;font-size:8.1px;color:#2a2a2a;letter-spacing:-0.072px;-webkit-text-stroke:0.15px #2a2a2a">90%</div>
<div class="a g" style="left:592.0px;top:371.24px;width:62.5px;height:28.08px;border-bottom:1px solid rgba(255,255,255,0.5)"></div>
<div class="t" style="left:615.18px;top:380.92px;font-size:8.1px;color:#2a2a2a;letter-spacing:-0.072px;-webkit-text-stroke:0.15px #2a2a2a">88%</div>
<div class="t" style="left:681.40px;top:380.92px;font-size:8.1px;color:#2a2a2a;letter-spacing:-0.072px;-webkit-text-stroke:0.15px #2a2a2a">71%</div>
<div class="a" style="left:59.5px;top:399.32px;width:665px;height:28.08px;background:#ffffff;border-bottom:1px solid #ececec"></div>
<div class="t" style="left:63.67px;top:409.34px;font-size:7.7px;letter-spacing:-0.086px;color:#2f63b5;-webkit-text-stroke:0.15px #2f63b5">Elem (Low), Elem 12</div>
<div class="t" style="left:170.74px;top:409.00px;font-size:8.1px;color:#2a2a2a;letter-spacing:-0.072px;-webkit-text-stroke:0.15px #2a2a2a">3 (C)</div>
<div class="t" style="left:226.15px;top:409.00px;font-size:8.1px;color:#2a2a2a;letter-spacing:-0.072px;-webkit-text-stroke:0.15px #2a2a2a">78%</div>
<div class="a g" style="left:262.0px;top:399.32px;width:53.5px;height:28.08px;border-bottom:1px solid rgba(255,255,255,0.5)"></div>
<div class="t" style="left:280.68px;top:409.00px;font-size:8.1px;color:#2a2a2a;letter-spacing:-0.072px;-webkit-text-stroke:0.15px #2a2a2a">84%</div>
<div class="a g" style="left:315.5px;top:399.32px;width:64.5px;height:28.08px;border-bottom:1px solid rgba(255,255,255,0.5)"></div>
<div class="t" style="left:339.67px;top:409.00px;font-size:8.1px;color:#2a2a2a;letter-spacing:-0.072px;-webkit-text-stroke:0.15px #2a2a2a">90%</div>
<div class="a g" style="left:380.0px;top:399.32px;width:62.0px;height:28.08px;border-bottom:1px solid rgba(255,255,255,0.5)"></div>
<div class="t" style="left:402.93px;top:409.00px;font-size:8.1px;color:#2a2a2a;letter-spacing:-0.072px;-webkit-text-stroke:0.15px #2a2a2a">83%</div>
<div class="a p" style="left:442.0px;top:399.32px;width:55.0px;height:28.08px;border-bottom:1px solid rgba(255,255,255,0.5)"></div>
<div class="t" style="left:461.40px;top:409.00px;font-size:8.1px;color:#2a2a2a;letter-spacing:-0.072px;-webkit-text-stroke:0.15px #2a2a2a">69%</div>
<div class="t" style="left:508.90px;top:409.00px;font-size:8.1px;color:#2a2a2a;letter-spacing:-0.072px;-webkit-text-stroke:0.15px #2a2a2a">79%</div>
<div class="t" style="left:556.40px;top:409.00px;font-size:8.1px;color:#2a2a2a;letter-spacing:-0.072px;-webkit-text-stroke:0.15px #2a2a2a">79%</div>
<div class="t" style="left:615.15px;top:409.00px;font-size:8.1px;color:#2a2a2a;letter-spacing:-0.072px;-webkit-text-stroke:0.15px #2a2a2a">71%</div>
<div class="a g" style="left:654.5px;top:399.32px;width:70.0px;height:28.08px;border-bottom:1px solid rgba(255,255,255,0.5)"></div>
<div class="t" style="left:681.43px;top:409.00px;font-size:8.1px;color:#2a2a2a;letter-spacing:-0.072px;-webkit-text-stroke:0.15px #2a2a2a">89%</div>
<div class="a" style="left:205.4px;top:258.2px;width:1.2px;height:171px;background:#ffffff"></div>
<div class="a" style="left:59.5px;top:420.5px;width:665px;height:9px;background:#ebebeb"></div>
<div class="t" style="left:226.15px;top:425.34px;font-size:8.1px;color:#2a2a2a;letter-spacing:-0.072px">79%</div>
<div class="t" style="left:280.65px;top:425.34px;font-size:8.1px;color:#2a2a2a;letter-spacing:-0.072px">79%</div>
<div class="t" style="left:339.65px;top:425.34px;font-size:8.1px;color:#2a2a2a;letter-spacing:-0.072px">77%</div>
<div class="t" style="left:402.90px;top:425.34px;font-size:8.1px;color:#2a2a2a;letter-spacing:-0.072px">77%</div>
<div class="a p" style="left:442.0px;top:421px;width:55.0px;height:8px"></div>
<div class="t" style="left:461.40px;top:425.34px;font-size:8.1px;color:#2a2a2a;letter-spacing:-0.072px">68%</div>
<div class="a g" style="left:497.0px;top:421px;width:40.0px;height:8px"></div>
<div class="t" style="left:508.92px;top:425.34px;font-size:8.1px;color:#2a2a2a;letter-spacing:-0.072px">91%</div>
<div class="a g" style="left:537.0px;top:421px;width:55.0px;height:8px"></div>
<div class="t" style="left:556.43px;top:425.34px;font-size:8.1px;color:#2a2a2a;letter-spacing:-0.072px">88%</div>
<div class="t" style="left:615.15px;top:425.34px;font-size:8.1px;color:#2a2a2a;letter-spacing:-0.072px">71%</div>
<div class="a g" style="left:654.5px;top:421px;width:70.0px;height:8px"></div>
<div class="t" style="left:681.43px;top:425.34px;font-size:8.1px;color:#2a2a2a;letter-spacing:-0.072px">84%</div>
<div class="t" style="left:64.12px;top:425.34px;font-size:8.1px;color:#2a2a2a;letter-spacing:-0.177px">Totals</div>
</body></html>
